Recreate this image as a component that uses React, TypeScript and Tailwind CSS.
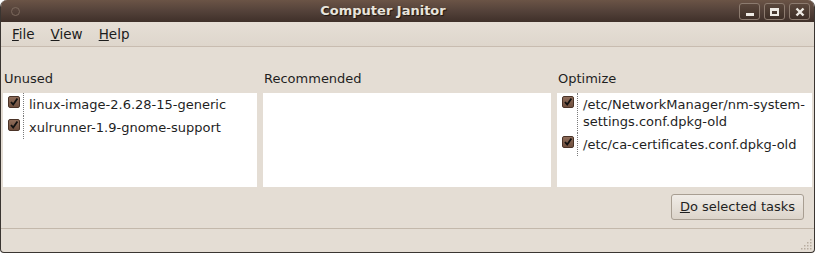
import React from 'react';

const font = { fontFamily: '"DejaVu Sans", "Liberation Sans", sans-serif' };

function Check() {
  return (
    <div className="w-[12px] h-[12px] rounded-[2px] border border-[#4a3327] bg-gradient-to-b from-[#8f6d5a] to-[#6f4f3e] flex items-center justify-center">
      <svg width="10" height="10" viewBox="0 0 10 10">
        <path d="M2 5 L4.2 7.6 L8.4 1.6" fill="none" stroke="#111" strokeWidth="1.8" />
      </svg>
    </div>
  );
}

function Row({ children }: { children: React.ReactNode }) {
  return (
    <div className="flex">
      <div className="w-[21px] shrink-0 pl-[5px] pt-[3px] border-r border-dotted border-[#7a7a7a]">
        <Check />
      </div>
      <div className="pl-[5px] py-[3px] leading-[17px] text-[13px] text-[#1f1f1f]">{children}</div>
    </div>
  );
}

function WinBtn({ children }: { children: React.ReactNode }) {
  return (
    <div className="w-[21px] h-[17px] rounded-[3px] border border-[#8c7b6f] bg-gradient-to-b from-[#5a473c] to-[#3e2f27] flex items-center justify-center">
      {children}
    </div>
  );
}

export default function App() {
  return (
    <div style={font} className="w-[815px] h-[253px] flex flex-col bg-[#e4ddd4] rounded-t-[7px] rounded-b-[4px] border-x border-b border-[#3a3531] overflow-hidden">
      {/* title bar */}
      <div className="relative h-[22px] shrink-0 bg-gradient-to-b from-[#6b5446] via-[#54423a] to-[#3f3029] flex items-center justify-center">
        <div className="absolute left-[10px] top-[7px] w-[9px] h-[9px] rounded-full border border-[#7d6a5e]" />
        <span className="text-[13px] font-bold text-[#e8e4dc] [text-shadow:1px_1px_1px_#1e1510] ml-[-49px]">Computer Janitor</span>
        <div className="absolute right-[4px] top-[3px] flex gap-[4px]">
          <WinBtn>
            <div className="w-[8px] h-[3px] bg-[#eeeae4] mt-[6px]" />
          </WinBtn>
          <WinBtn>
            <div className="w-[9px] h-[8px] border-[#eeeae4] border-2 border-t-[3px]" />
          </WinBtn>
          <WinBtn>
            <svg width="10" height="10" viewBox="0 0 10 10">
              <path d="M1.5 1.5 L8.5 8.5 M8.5 1.5 L1.5 8.5" stroke="#eeeae4" strokeWidth="2.4" />
            </svg>
          </WinBtn>
        </div>
      </div>

      {/* menu bar */}
      <div className="h-[25px] shrink-0 flex items-center gap-[16px] pl-[11px] text-[13.5px] text-[#1c1c1c] bg-gradient-to-b from-[#e6dfd6] to-[#ded6cc] border-b border-[#c8bcb0]">
        <span><u>F</u>ile</span>
        <span><u>V</u>iew</span>
        <span><u>H</u>elp</span>
      </div>

      {/* columns */}
      <div className="flex gap-[6px] px-[2px] text-[13px] text-[#1f1f1f]">
        <div className="w-[254px] flex flex-col">
          <div className="h-[46px] flex items-end pb-[5px] pl-[1px]">Unused</div>
          <div className="h-[94px] bg-white">
            <Row>linux-image-2.6.28-15-generic</Row>
            <Row>xulrunner-1.9-gnome-support</Row>
          </div>
        </div>
        <div className="w-[288px] flex flex-col">
          <div className="h-[46px] flex items-end pb-[5px] pl-[1px]">Recommended</div>
          <div className="h-[94px] bg-white" />
        </div>
        <div className="w-[255px] flex flex-col">
          <div className="h-[46px] flex items-end pb-[5px] pl-[1px]">Optimize</div>
          <div className="h-[94px] bg-white">
            <Row>/etc/NetworkManager/nm-system-<br />settings.conf.dpkg-old</Row>
            <Row>/etc/ca-certificates.conf.dpkg-old</Row>
          </div>
        </div>
      </div>

      {/* action */}
      <div className="flex justify-end pt-[7px] pr-[10px] h-[42px] border-b border-[#c3b8ab]">
        <button className="w-[133px] h-[26px] rounded-[3px] border border-[#a89e92] bg-gradient-to-b from-[#f0ece7] to-[#dcd4ca] text-[13px] text-[#1f1f1f]">
          <u>D</u>o selected tasks
        </button>
      </div>

      {/* status bar */}
      <div className="relative flex-1">
        <svg className="absolute right-[2px] bottom-[2px]" width="14" height="14" viewBox="0 0 14 14">
          {[[12, 3], [12, 6], [9, 6], [12, 9], [9, 9], [6, 9], [12, 12], [9, 12], [6, 12], [3, 12]].map(([x, y], i) => (
            <rect key={i} x={x} y={y} width="1.5" height="1.5" fill="#b8ad9f" />
          ))}
        </svg>
      </div>
    </div>
  );
}
